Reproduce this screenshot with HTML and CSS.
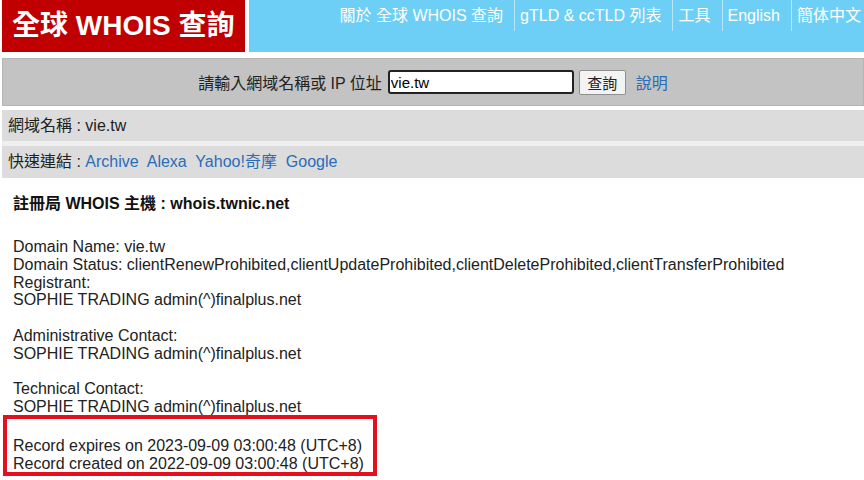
FILE: index.html
```html
<!DOCTYPE html>
<html lang="zh-Hant">
<head>
<meta charset="utf-8">
<title>全球 WHOIS 查詢</title>
<link rel="stylesheet" href="styles.css">
</head>
<body>
<div class="header">
  <div class="logo">全球 WHOIS 查詢</div>
  <div class="nav">
    <a class="nav-item first">關於 全球 WHOIS 查詢</a>
    <a class="nav-item">gTLD &amp; ccTLD 列表</a>
    <a class="nav-item">工具</a>
    <a class="nav-item">English</a>
    <a class="nav-item last">簡体中文</a>
  </div>
</div>
<div class="search">
  <span class="search-label">請輸入網域名稱或 IP 位址</span>
  <input class="search-input" type="text" value="vie.tw">
  <button class="search-btn">查詢</button>
  <a class="link help">說明</a>
</div>
<div class="row">網域名稱 : vie.tw</div>
<div class="row row-links">快速連結 : <a class="link">Archive</a>&nbsp; <a class="link">Alexa</a>&nbsp; <a class="link">Yahoo!奇摩</a>&nbsp; <a class="link">Google</a></div>
<div class="content">
  <div class="server">註冊局 WHOIS 主機 : whois.twnic.net</div>
  <div class="record">Domain Name: vie.tw
Domain Status: clientRenewProhibited,clientUpdateProhibited,clientDeleteProhibited,clientTransferProhibited
Registrant:
SOPHIE TRADING admin(^)finalplus.net

Administrative Contact:
SOPHIE TRADING admin(^)finalplus.net

Technical Contact:
SOPHIE TRADING admin(^)finalplus.net</div>
  <div class="record highlight">
Record expires on 2023-09-09 03:00:48 (UTC+8)
Record created on 2022-09-09 03:00:48 (UTC+8)</div>
</div>
</body>
</html>
```
FILE: styles.css
```css
html, body {
  margin: 0;
  padding: 0;
  background: #fff;
}
body {
  padding: 0 0 0 2px;
  font-family: "Liberation Sans", Arial, "Noto Sans CJK TC", sans-serif;
  font-size: 16px;
  color: #222;
  overflow: hidden;
}
.header {
  display: flex;
  gap: 4px;
  height: 52px;
}
.logo {
  width: 243px;
  background: #c00000;
  color: #fff;
  font-weight: bold;
  font-size: 28px;
  line-height: 52px;
  padding-left: 10px;
  box-sizing: border-box;
  white-space: nowrap;
}
.nav {
  flex: 1;
  background: #6dcff6;
  display: flex;
  justify-content: flex-end;
  align-items: flex-start;
  padding-right: 3px;
}
.nav-item {
  color: #fff;
  font-size: 16px;
  line-height: 31px;
  padding: 0 11px 0 5px;
  border-left: 1px solid #b7e6fa;
  white-space: nowrap;
}
.nav-item.first {
  border-left: none;
}
.nav-item.last {
  padding-right: 0;
}
.search {
  margin-top: 6px;
  height: 48px;
  box-sizing: border-box;
  background: #c3c3c3;
  border: 1px solid #b5b5b5;
  display: flex;
  align-items: center;
  justify-content: center;
}
.search-label {
  color: #222;
  margin-right: 6px;
}
.search-input {
  width: 186px;
  height: 24px;
  box-sizing: border-box;
  border: 2px solid #222;
  border-radius: 3px;
  font-family: "Liberation Sans", Arial, sans-serif;
  font-size: 15px;
  padding: 0 1px;
  color: #000;
}
.search-btn {
  margin-left: 5px;
  height: 25px;
  width: 47px;
  box-sizing: border-box;
  border: 1px solid #8f8f8f;
  border-radius: 2px;
  background: #f3f3f3;
  font-family: "Liberation Sans", "Noto Sans CJK TC", sans-serif;
  font-size: 15px;
  color: #222;
  padding: 0;
}
.help {
  margin-left: 10px;
}
.link {
  color: #2a6cb8;
  text-decoration: none;
}
.row {
  margin-top: 4px;
  height: 31px;
  line-height: 31px;
  background: #dcdcdc;
  padding-left: 6px;
  color: #222;
}
.row-links {
  margin-top: 0;
  border-top: 5px solid #efefef;
  height: 32px;
  line-height: 32px;
}
.content {
  padding: 15px 0 0 11px;
}
.server {
  font-weight: bold;
  line-height: 22px;
  margin-bottom: 23px;
  color: #111;
}
.record {
  white-space: pre-line;
  line-height: 17.8px;
  color: #222;
}
.highlight {
  margin: -1px 0 0 -10px;
  width: 374px;
  padding: 0 0 0 6px;
  border: 4px solid #e5101e;
  box-sizing: border-box;
}
```
